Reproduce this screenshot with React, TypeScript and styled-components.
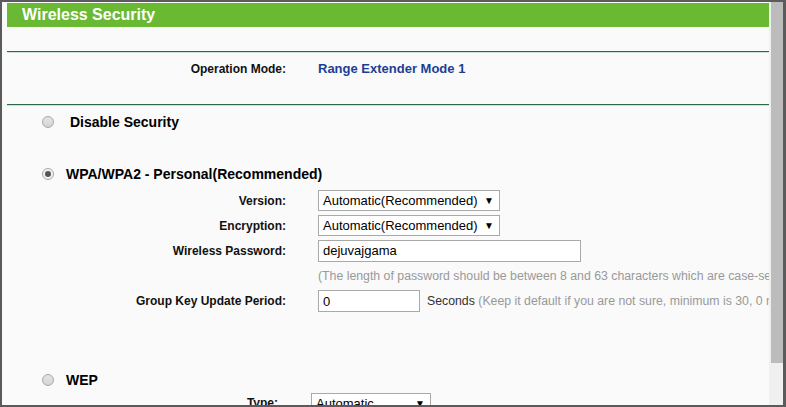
import React from 'react'
import styled, { createGlobalStyle } from 'styled-components'

const Global = createGlobalStyle`
  html, body {
    margin: 0;
    padding: 0;
    background: #fafafa;
    font-family: "Liberation Sans", Arial, sans-serif;
  }
`

const Frame = styled.div`
  width: 786px;
  height: 407px;
  box-sizing: border-box;
  border-top: 2px solid #5b5b5b;
  border-left: 2px solid #5b5b5b;
  border-bottom: 2px solid #5b5b5b;
  border-right: 3px solid #5b5b5b;
  display: flex;
  overflow: hidden;
`

const Content = styled.div`
  flex: 1;
  min-width: 0;
  background: #fafafa;
  padding: 1px 0 0 5px;
  overflow: hidden;
`

const Scrollbar = styled.div`
  width: 14px;
  flex: none;
  background: #f0f0f0;
  display: flex;
  justify-content: flex-end;
`

const Thumb = styled.div`
  width: 12px;
  height: 361px;
  background: #bcbcbc;
`

const Header = styled.div`
  height: 24px;
  background: #69b933;
  color: #fff;
  font-weight: bold;
  font-size: 16px;
  line-height: 24px;
  padding-left: 15px;
`

const Divider = styled.div<{ $top: number }>`
  margin-top: ${p => p.$top}px;
  height: 1px;
  border-top: 1px solid #2b6b46;
  background: #cfe0d5;
`

const ModeRow = styled.div`
  height: 51px;
  box-sizing: border-box;
  padding-top: 8px;
  display: grid;
  grid-template-columns: 279px auto;
  column-gap: 32px;
  line-height: 16px;
`

const Label = styled.div`
  text-align: right;
  font-size: 12px;
  font-weight: bold;
  color: #111;
  white-space: nowrap;
`

const ModeValue = styled.div`
  font-size: 13px;
  font-weight: bold;
  color: #1c3f94;
`

const OptionRow = styled.div<{ $top: number; $height: number; $gap: number }>`
  margin-top: ${p => p.$top}px;
  height: ${p => p.$height}px;
  display: flex;
  align-items: center;
  padding-left: 35px;
  gap: ${p => p.$gap}px;
  font-size: 14px;
  font-weight: bold;
  color: #000;
`

const Radio = styled.span<{ $checked?: boolean }>`
  width: 12px;
  height: 12px;
  box-sizing: border-box;
  border-radius: 50%;
  border: 1px solid #a8a8a8;
  background: ${p => (p.$checked ? '#f2f2f2' : 'linear-gradient(#e4e4e4, #d4d4d4)')};
  display: flex;
  align-items: center;
  justify-content: center;
  flex: none;

  &::after {
    content: '';
    display: ${p => (p.$checked ? 'block' : 'none')};
    width: 6px;
    height: 6px;
    border-radius: 50%;
    background: #555;
  }
`

const FormRow = styled.div<{ $labelWidth: number; $gap: number; $height: number }>`
  height: ${p => p.$height}px;
  display: grid;
  grid-template-columns: ${p => p.$labelWidth}px 1fr;
  column-gap: ${p => p.$gap}px;
  align-items: center;
  white-space: nowrap;
`

const Field = styled.div`
  display: flex;
  align-items: center;
  gap: 7px;
  min-width: 0;
  overflow: hidden;
  font-size: 12.3px;
`

const Select = styled.div<{ $width: number }>`
  width: ${p => p.$width}px;
  height: 21px;
  box-sizing: border-box;
  border: 1px solid #a9a9a9;
  background: #fff;
  display: flex;
  align-items: center;
  justify-content: space-between;
  padding: 0 5px 0 4px;
  font-size: 13px;
  color: #000;
  flex: none;
`

const Arrow = styled.span`
  font-size: 10px;
  color: #000;
`

const TextInput = styled.div<{ $width: number }>`
  width: ${p => p.$width}px;
  height: 22px;
  box-sizing: border-box;
  border: 1px solid #a9a9a9;
  background: #fff;
  display: flex;
  align-items: center;
  padding-left: 4px;
  font-size: 13px;
  color: #000;
  flex: none;
`

const Hint = styled.span`
  color: #999;
  font-size: 12.3px;
`

const Unit = styled.span`
  color: #333;
`

const Spacer = styled.div<{ $height: number }>`
  height: ${p => p.$height}px;
`

export default function App() {
  return (
    <>
      <Global />
      <Frame>
        <Content>
          <Header>Wireless Security</Header>
          <Divider $top={24} />
          <ModeRow>
            <Label>Operation Mode:</Label>
            <ModeValue>Range Extender Mode 1</ModeValue>
          </ModeRow>
          <Divider $top={0} />

          <OptionRow $top={0} $height={32} $gap={16}>
            <Radio />
            Disable Security
          </OptionRow>

          <OptionRow $top={26} $height={20} $gap={12}>
            <Radio $checked />
            WPA/WPA2 - Personal(Recommended)
          </OptionRow>
          <Spacer $height={4} />
          <FormRow $labelWidth={279} $gap={32} $height={25}>
            <Label>Version:</Label>
            <Field>
              <Select $width={182}>
                Automatic(Recommended)
                <Arrow>▼</Arrow>
              </Select>
            </Field>
          </FormRow>
          <FormRow $labelWidth={279} $gap={32} $height={25}>
            <Label>Encryption:</Label>
            <Field>
              <Select $width={182}>
                Automatic(Recommended)
                <Arrow>▼</Arrow>
              </Select>
            </Field>
          </FormRow>
          <FormRow $labelWidth={279} $gap={32} $height={25}>
            <Label>Wireless Password:</Label>
            <Field>
              <TextInput $width={263}>dejuvajgama</TextInput>
            </Field>
          </FormRow>
          <FormRow $labelWidth={279} $gap={32} $height={26}>
            <span />
            <Field>
              <Hint>(The length of password should be between 8 and 63 characters which are case-sensitive.)</Hint>
            </Field>
          </FormRow>
          <FormRow $labelWidth={279} $gap={32} $height={24}>
            <Label>Group Key Update Period:</Label>
            <Field>
              <TextInput $width={102}>0</TextInput>
              <span>
                <Unit>Seconds</Unit>{' '}
                <Hint>(Keep it default if you are not sure, minimum is 30, 0 means no update)</Hint>
              </span>
            </Field>
          </FormRow>

          <OptionRow $top={57} $height={20} $gap={12}>
            <Radio />
            WEP
          </OptionRow>
          <FormRow $labelWidth={271} $gap={33} $height={26}>
            <Label>Type:</Label>
            <Field>
              <Select $width={120}>
                Automatic
                <Arrow>▼</Arrow>
              </Select>
            </Field>
          </FormRow>
        </Content>
        <Scrollbar>
          <Thumb />
        </Scrollbar>
      </Frame>
    </>
  )
}
